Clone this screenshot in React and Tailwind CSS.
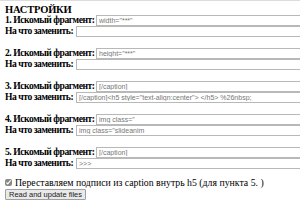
const groups = [
  { n: 1, find: 'width="***"', repl: "" },
  { n: 2, find: 'height="***"', repl: "" },
  { n: 3, find: "[/caption]", repl: '[/caption]<h5 style="text-align:center"> </h5> %26nbsp;' },
  { n: 4, find: 'img class="', repl: 'img class="slideanim' },
  { n: 5, find: "[/caption]", repl: ">>>" },
];

function Field({ value }) {
  return (
    <input
      readOnly
      value={value}
      className="h-[11px] w-[260px] shrink-0 border border-[#b8b8b8] bg-white px-[2px] font-['Liberation_Sans',Arial,sans-serif] text-[7px] font-normal leading-[9px] tracking-normal text-[#777] outline-none"
    />
  );
}

export default function App() {
  return (
    <div className="h-[200px] w-[300px] overflow-hidden border-t border-[#dcdcdc] bg-white pl-[5px] font-['Liberation_Serif','Times_New_Roman',serif] text-black">
      <div className="mt-[3px] text-[10.5px] font-bold leading-[11px] tracking-[-0.2px]">НАСТРОЙКИ</div>
      <div className="flex flex-col gap-[11px]">
        {groups.map((g) => (
          <div key={g.n} className="flex flex-col">
            <div className="flex h-[11px] items-center whitespace-nowrap text-[9.6px] font-bold tracking-[-0.45px]">
              <span className="w-[91px] shrink-0">{g.n}. Искомый фрагмент:</span>
              <Field value={g.find} />
            </div>
            <div className="flex h-[11px] items-center whitespace-nowrap text-[9.6px] font-bold tracking-[-0.45px]">
              <span className="w-[71px] shrink-0">На что заменить:</span>
              <Field value={g.repl} />
            </div>
          </div>
        ))}
      </div>
      <div className="mt-[9px] flex h-[9px] items-center gap-[3px] whitespace-nowrap text-[9.8px] leading-[9px]">
        <input type="checkbox" defaultChecked className="h-[7px] w-[7px] shrink-0 accent-[#888]" />
        <span>Переставляем подписи из caption внутрь h5 (для пункта 5. )</span>
      </div>
      <button className="mt-[2px] block h-[11px] rounded-[1px] border border-[#a0a0a0] bg-[#e9e9e9] px-[3px] font-['Liberation_Sans',Arial,sans-serif] text-[7.5px] leading-[9px] text-[#222]">
        Read and update files
      </button>
    </div>
  );
}
